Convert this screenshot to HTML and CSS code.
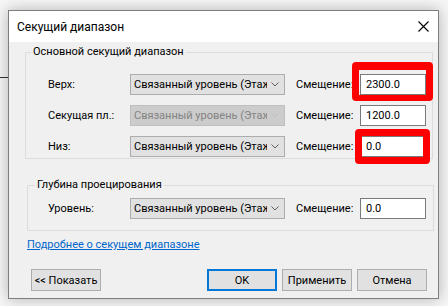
FILE: index.html
```html
<!DOCTYPE html>
<html lang="ru">
<head>
  <meta charset="UTF-8" />
  <title>Секущий диапазон</title>
  <link rel="stylesheet" href="styles.css">
</head>
<body>
  <div class="backdrop-line"></div>

  <div class="dialog">
    <div class="titlebar">
      <span class="title">Секущий диапазон</span>
      <span class="close">
        <svg width="11" height="11" viewBox="0 0 11 11">
          <path d="M0.5 0.5 L10.5 10.5 M10.5 0.5 L0.5 10.5" stroke="#000" stroke-width="1.1" fill="none"/>
        </svg>
      </span>
    </div>

    <div class="content">
      <div class="group main">
        <span class="group-title">Основной секущий диапазон</span>

        <div class="row">
          <label>Верх:</label>
          <div class="combo">
            <span class="combo-text">Связанный уровень (Этаж 1)</span>
            <svg class="chev" width="8" height="5" viewBox="0 0 8 5"><path d="M0.5 0.5 L4 4 L7.5 0.5" stroke="#606060" fill="none"/></svg>
          </div>
          <label class="off-label">Смещение:</label>
          <span class="field">
            <input type="text" value="2300.0" />
            <span class="mark mark-top"></span>
          </span>
        </div>

        <div class="row">
          <label>Секущая пл.:</label>
          <div class="combo disabled">
            <span class="combo-text">Связанный уровень (Этаж 1)</span>
            <svg class="chev" width="8" height="5" viewBox="0 0 8 5"><path d="M0.5 0.5 L4 4 L7.5 0.5" stroke="#bfbfbf" fill="none"/></svg>
          </div>
          <label class="off-label">Смещение:</label>
          <span class="field">
            <input type="text" value="1200.0" />
          </span>
        </div>

        <div class="row">
          <label>Низ:</label>
          <div class="combo">
            <span class="combo-text">Связанный уровень (Этаж 1)</span>
            <svg class="chev" width="8" height="5" viewBox="0 0 8 5"><path d="M0.5 0.5 L4 4 L7.5 0.5" stroke="#606060" fill="none"/></svg>
          </div>
          <label class="off-label">Смещение:</label>
          <span class="field">
            <input type="text" value="0.0" />
            <span class="mark mark-bottom"></span>
          </span>
        </div>
      </div>

      <div class="group depth">
        <span class="group-title">Глубина проецирования</span>

        <div class="row">
          <label>Уровень:</label>
          <div class="combo">
            <span class="combo-text">Связанный уровень (Этаж 1)</span>
            <svg class="chev" width="8" height="5" viewBox="0 0 8 5"><path d="M0.5 0.5 L4 4 L7.5 0.5" stroke="#606060" fill="none"/></svg>
          </div>
          <label class="off-label">Смещение:</label>
          <span class="field">
            <input type="text" value="0.0" />
          </span>
        </div>
      </div>

      <a href="#" class="more">Подробнее о секущем диапазоне</a>

      <div class="actions">
        <button class="btn">&lt;&lt; Показать</button>
        <div class="btn-group">
          <button class="btn default">OK</button>
          <button class="btn">Применить</button>
          <button class="btn">Отмена</button>
        </div>
      </div>
    </div>
  </div>
</body>
</html>
```

FILE: styles.css
```css
body {
  margin: 0;
  padding: 10px 0 0 8px;
  background: #f6f6f6;
  font-family: Roboto, "Liberation Sans", Arial, sans-serif;
  font-size: 11px;
  color: #000;
  overflow: hidden;
  position: relative;
  height: 306px;
  box-sizing: border-box;
}

.backdrop-line {
  position: absolute;
  left: 0;
  top: 77px;
  width: 8px;
  height: 1px;
  background: #333;
}

.dialog {
  position: relative;
  width: 431px;
  height: 289px;
  box-sizing: border-box;
  border: 1px solid #7e7e7e;
  background: #f0f0f0;
  box-shadow: 0 0 14px rgba(0, 0, 0, 0.28);
  display: flex;
  flex-direction: column;
}

.titlebar {
  height: 31px;
  background: #fff;
  display: flex;
  align-items: center;
  justify-content: space-between;
  padding: 0 9px 0 8px;
}

.title {
  font-size: 12px;
  line-height: 14px;
}

.close {
  display: flex;
  margin-top: -1px;
}

.content {
  padding: 10px 5px 0 16px;
  display: flex;
  flex-direction: column;
}

.group {
  border: 1px solid #dcdcdc;
  padding: 0 0 1px 22px;
  display: flex;
  flex-direction: column;
}

.group-title {
  align-self: flex-start;
  margin: -8px 0 15px -17px;
  padding: 0 2px;
  background: #f0f0f0;
  line-height: 14px;
  white-space: nowrap;
}

.group.depth {
  margin: 26px -1px 0 2px;
  padding: 0 0 11px 20px;
}

.group.depth .group-title {
  margin: -8px 0 6px -13px;
}

.row {
  display: grid;
  grid-template-columns: 82px 155px 75px 66px;
  align-items: center;
  height: 21px;
}

.row + .row {
  margin-top: 10px;
}

.row label {
  line-height: 14px;
  white-space: nowrap;
}

.off-label {
  margin-left: 11px;
}

.combo {
  height: 21px;
  box-sizing: border-box;
  border: 1px solid #adadad;
  background: #e1e1e1;
  display: flex;
  align-items: center;
  padding: 0 5px 0 3px;
}

.combo-text {
  flex: 1;
  overflow: hidden;
  white-space: nowrap;
  line-height: 14px;
  margin-right: 4px;
}

.chev {
  flex: none;
}

.combo.disabled {
  background: #cccccc;
  border-color: #bfbfbf;
  color: #838383;
}

.field {
  position: relative;
  display: block;
  height: 21px;
}

.field input {
  width: 66px;
  height: 21px;
  box-sizing: border-box;
  border: 1px solid #7a7a7a;
  background: #fff;
  padding: 0 0 0 5px;
  margin: 0;
  font-family: inherit;
  font-size: 11px;
  color: #000;
  outline: none;
}

.mark {
  position: absolute;
  border: 7px solid #ff0000;
  border-radius: 4px;
  pointer-events: none;
}

.mark-top {
  left: -8px;
  right: -7px;
  top: -12px;
  bottom: -6px;
  border-width: 8px 7px 6px 7px;
}

.mark-bottom {
  left: -5px;
  right: -4px;
  top: -7px;
  bottom: -7px;
}

.more {
  margin: 7px 0 0 2px;
  align-self: flex-start;
  color: #0066cc;
  line-height: 14px;
}

.actions {
  margin: 17px 6px 0 6px;
  display: flex;
  justify-content: space-between;
}

.btn-group {
  display: flex;
  gap: 5px;
}

.btn {
  width: 70px;
  height: 22px;
  box-sizing: border-box;
  border: 1px solid #adadad;
  background: #e1e1e1;
  font-family: inherit;
  font-size: 11px;
  color: #000;
  padding: 0;
  margin: 0;
  white-space: nowrap;
}

.btn.default {
  border: 2px solid #0078d7;
}
```
